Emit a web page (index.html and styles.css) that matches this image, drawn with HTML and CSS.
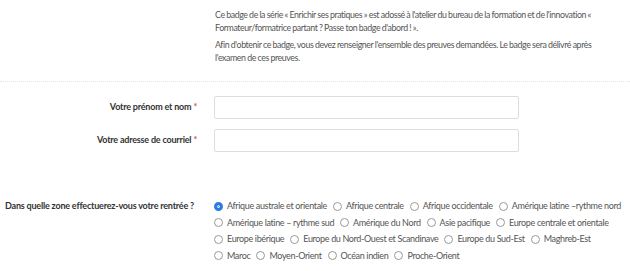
FILE: index.html
```html
<!DOCTYPE html>
<html lang="fr">

<head>
    <meta charset="UTF-8">
    <meta name="viewport" content="width=device-width, initial-scale=1.0">
    <title>Badge</title>
    <link rel="stylesheet" href="styles.css">
</head>

<body>

    <div class="intro">
        <p>Ce badge de la série « Enrichir ses pratiques » est adossé à l'atelier du bureau de la formation et de l'innovation « Formateur/formatrice partant ? Passe ton badge d'abord ! ».</p>
        <p>Afin d'obtenir ce badge, vous devez renseigner l'ensemble des preuves demandées. Le badge sera délivré après l'examen de ces preuves.</p>
    </div>

    <form class="badge-form">
        <div class="form-row">
            <label for="nom">Votre prénom et nom <span class="required">*</span></label>
            <input type="text" id="nom">
        </div>
        <div class="form-row">
            <label for="courriel">Votre adresse de courriel <span class="required">*</span></label>
            <input type="text" id="courriel">
        </div>

        <div class="form-row zone-row">
            <label>Dans quelle zone effectuerez-vous votre rentrée ?</label>
            <div class="radios">
                <span class="radio"><span class="dot checked"></span>Afrique australe et orientale</span>
                <span class="radio"><span class="dot"></span>Afrique centrale</span>
                <span class="radio"><span class="dot"></span>Afrique occidentale</span>
                <span class="radio"><span class="dot"></span>Amérique latine –rythme nord</span>
                <span class="radio"><span class="dot"></span>Amérique latine – rythme sud</span>
                <span class="radio"><span class="dot"></span>Amérique du Nord</span>
                <span class="radio"><span class="dot"></span>Asie pacifique</span>
                <span class="radio"><span class="dot"></span>Europe centrale et orientale</span>
                <span class="radio"><span class="dot"></span>Europe ibérique</span>
                <span class="radio"><span class="dot"></span>Europe du Nord-Ouest et Scandinave</span>
                <span class="radio"><span class="dot"></span>Europe du Sud-Est</span>
                <span class="radio"><span class="dot"></span>Maghreb-Est</span>
                <span class="radio"><span class="dot"></span>Maroc</span>
                <span class="radio"><span class="dot"></span>Moyen-Orient</span>
                <span class="radio"><span class="dot"></span>Océan indien</span>
                <span class="radio"><span class="dot"></span>Proche-Orient</span>
            </div>
        </div>
    </form>

</body>

</html>
```

FILE: styles.css
```css
body {
    font-family: Lato, "Liberation Sans", sans-serif;
    font-size: 9px;
    letter-spacing: -0.2px;
    line-height: 12.5px;
    color: #555;
    background-color: white;
    margin: 0;
    padding: 0;
}

.intro {
    padding: 9px 9px 17px 215px;
    border-bottom: 1px dotted #e4e4e4;
    font-size: 8.8px;
    letter-spacing: -0.4px;
    word-spacing: -0.3px;
}

.intro p {
    margin: 0 0 5px;
}

.intro p:last-child {
    margin-bottom: 0;
}

.badge-form {
    padding-top: 14px;
}

.form-row {
    display: flex;
    align-items: center;
    margin-bottom: 10px;
}

.form-row label {
    width: 197px;
    flex-shrink: 0;
    text-align: right;
    font-weight: bold;
    color: #333;
    margin-right: 17px;
}

.required {
    color: #d9534f;
}

.form-row input {
    width: 305px;
    height: 23px;
    box-sizing: border-box;
    border: 1px solid #ddd;
    border-radius: 2px;
    margin: 0;
}

.zone-row {
    margin-top: 46px;
    align-items: flex-start;
}

.zone-row label {
    width: 194px;
    margin-right: 20px;
    padding-top: 2px;
}

.radios {
    flex: 1;
    display: flex;
    flex-wrap: wrap;
    margin-left: -6px;
    letter-spacing: -0.35px;
}

.radio {
    display: inline-flex;
    align-items: center;
    margin-left: 6px;
    height: 16.5px;
    white-space: nowrap;
}

.radios .radio:first-child {
    margin-left: 0;
    padding-left: 6px;
}

.dot {
    width: 9px;
    height: 9px;
    box-sizing: border-box;
    border: 1px solid #999;
    border-radius: 50%;
    margin-right: 4px;
    background-color: white;
}

.dot.checked {
    border: 3px solid #2c7be5;
    box-shadow: inset 0 0 0 1px white;
    background-color: #2c7be5;
}
```
